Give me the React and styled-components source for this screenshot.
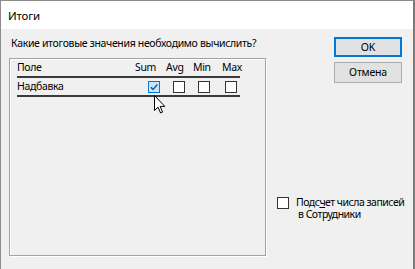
import React from 'react';
import styled, { createGlobalStyle } from 'styled-components';

const Global = createGlobalStyle`
  html, body { margin: 0; padding: 0; background: #f0f0f0; }
  body { font-family: "Noto Sans", "Open Sans", sans-serif; font-size: 10.5px; letter-spacing: -0.33px; color: #000; }
`;

const Window = styled.div`
  position: relative;
  width: 415px;
  height: 269px;
  box-sizing: border-box;
  border: 1px solid #8c8c8c;
  border-right: 2px solid #7a7a7a;
  border-bottom: none;
  background: #f0f0f0;
  display: flex;
  flex-direction: column;
  overflow: hidden;
`;

const TitleBar = styled.div`
  height: 28px;
  flex: none;
  background: #fff;
  padding-left: 7px;
  display: flex;
  align-items: center;
  font-size: 11.5px;
  letter-spacing: -0.2px;
`;

const Body = styled.div`
  display: flex;
  flex: 1;
`;

const LeftCol = styled.div`
  flex: none;
  width: 257px;
  padding: 6px 0 0 8px;
  display: flex;
  flex-direction: column;
`;

const Prompt = styled.div`
  line-height: 16px;
  padding-left: 2px;
  white-space: nowrap;
`;

const GroupBox = styled.div`
  margin-top: 7px;
  width: 257px;
  height: 198px;
  box-sizing: border-box;
  border: 1px solid #a3a3a3;
  box-shadow: inset 1px 1px 0 #fff, 1px 1px 0 #fff;
  padding: 0 0 0 7px;
`;

const Grid = styled.div`
  display: grid;
  grid-template-columns: 118px 31px 27px 29px 18px;
  width: 223px;
`;

const HeadCell = styled.div`
  height: 17px;
  line-height: 17px;
  border-bottom: 2px solid #3a3a3a;
  white-space: nowrap;
`;

const RowCell = styled.div`
  height: 17px;
  line-height: 17px;
  border-bottom: 2px solid #3a3a3a;
  display: flex;
  align-items: center;
  padding-left: ${p => p.$offset || 0}px;
  white-space: nowrap;
`;

const Box = styled.span`
  display: inline-block;
  box-sizing: border-box;
  width: 12px;
  height: 12px;
  border: 1px solid ${p => (p.$active ? '#0078d7' : '#333')};
  background: ${p => (p.$active ? '#cce4f7' : '#fff')};
  position: relative;
  flex: none;
`;

const RightCol = styled.div`
  flex: 1;
  min-width: 0;
  display: flex;
  flex-direction: column;
  padding: 8px 11px 0 11px;
`;

const Button = styled.button`
  align-self: flex-end;
  width: 68px;
  height: ${p => p.$h || 20}px;
  margin-bottom: ${p => p.$mb || 0}px;
  box-sizing: border-box;
  border: ${p => (p.$default ? '2px solid #0078d7' : '1px solid #adadad')};
  background: #e1e1e1;
  font-family: inherit;
  font-size: 10.5px;
  letter-spacing: -0.2px;
  color: #000;
  padding: 0;
  line-height: 1;
`;

const CountRow = styled.div`
  margin-top: 114px;
  display: flex;
  align-items: flex-start;
  gap: 7px;
`;

const CountText = styled.div`
  line-height: 12px;
  margin-top: -1px;
  letter-spacing: -0.5px;
  white-space: nowrap;
`;

const SecondLine = styled.span`
  display: inline-block;
  padding-left: 2px;
`;

const Accel = styled.span`
  text-decoration: underline;
`;

const Cursor = styled.svg`
  position: absolute;
  left: 153px;
  top: 94px;
`;

const Check = () => (
  <svg width="10" height="10" viewBox="0 0 10 10" style={{ position: 'absolute', left: 0, top: 0 }}>
    <path d="M1.8 5.2 L4 7.4 L8.4 2.4" fill="none" stroke="#1a5a9e" strokeWidth="1.5" />
  </svg>
);

const cols = [
  { name: 'Sum', offset: 13, active: true },
  { name: 'Avg', offset: 7 },
  { name: 'Min', offset: 5 },
  { name: 'Max', offset: 3 },
];

export default function App() {
  return (
    <>
      <Global />
      <Window>
        <TitleBar>Итоги</TitleBar>
        <Body>
          <LeftCol>
            <Prompt>Какие итоговые значения необходимо вычислить?</Prompt>
            <GroupBox>
              <Grid>
                <HeadCell>Поле</HeadCell>
                {cols.map(c => (
                  <HeadCell key={c.name}>{c.name}</HeadCell>
                ))}
                <RowCell>Надбавка</RowCell>
                {cols.map(c => (
                  <RowCell key={c.name} $offset={c.offset}>
                    <Box $active={c.active}>{c.active && <Check />}</Box>
                  </RowCell>
                ))}
              </Grid>
            </GroupBox>
          </LeftCol>
          <RightCol>
            <Button $default $mb={5}>OK</Button>
            <Button $h={21}>Отмена</Button>
            <CountRow>
              <Box />
              <CountText>
                Подс<Accel>ч</Accel>ет числа записей
                <br />
                <SecondLine>в Сотрудники</SecondLine>
              </CountText>
            </CountRow>
          </RightCol>
        </Body>
        <Cursor width="12" height="19" viewBox="0 0 12 19">
          <path
            d="M0.5 0.5 L0.5 15.5 L4 12.2 L6.6 18 L8.6 17.1 L6.1 11.4 L10.8 11.4 Z"
            fill="#fff"
            stroke="#000"
            strokeWidth="1"
            strokeLinejoin="miter"
          />
        </Cursor>
      </Window>
    </>
  );
}
